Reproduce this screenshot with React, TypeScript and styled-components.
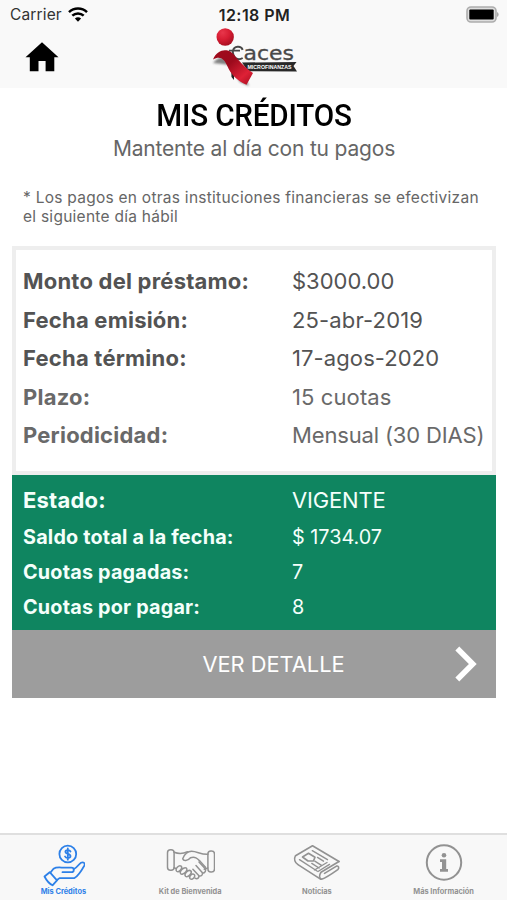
import React from 'react';
import styled, { createGlobalStyle } from 'styled-components';

const GlobalStyle = createGlobalStyle`
  * { box-sizing: border-box; }
  body { margin: 0; background: #fff; font-family: Inter, "Liberation Sans", sans-serif; }
`;

const Screen = styled.div`
  width: 507px;
  height: 900px;
  display: flex;
  flex-direction: column;
  background: #fff;
  overflow: hidden;
`;

const TopArea = styled.header`
  height: 88px;
  flex: none;
  background: #f9f9f9;
`;

const StatusBar = styled.div`
  height: 28px;
  padding: 1px 8px 0 10px;
  display: grid;
  grid-template-columns: 1fr auto 1fr;
  align-items: center;
`;

const Carrier = styled.div`
  display: flex;
  align-items: center;
  gap: 6px;
  font-size: 15.5px;
  letter-spacing: 0.15px;
  color: #333;
`;

const Clock = styled.div`
  font-size: 16px;
  font-weight: 600;
  letter-spacing: 0.45px;
  color: #222;
`;

const BatterySlot = styled.div`
  display: flex;
  justify-content: flex-end;
`;

const NavBar = styled.nav`
  height: 60px;
  padding: 0 25px;
  display: grid;
  grid-template-columns: 1fr auto 1fr;
  align-items: start;
`;

const HomeButton = styled.button`
  width: 34px;
  height: 44px;
  margin-top: 13px;
  padding: 0;
  border: 0;
  background: none;
  display: flex;
  align-items: flex-start;
`;

const Main = styled.main`
  flex: 1;
  display: flex;
  flex-direction: column;
  padding: 0 11px 0 12px;
`;

const Title = styled.h1`
  margin: 9px 0 0;
  height: 38px;
  line-height: 38px;
  text-align: center;
  font-family: Roboto, sans-serif;
  font-weight: 500;
  font-size: 31.5px;
  letter-spacing: -0.2px;
  transform: scaleX(0.94);
  color: #000;
`;

const Subtitle = styled.p`
  margin: 0;
  height: 28px;
  line-height: 28px;
  text-align: center;
  font-size: 21px;
  letter-spacing: -0.18px;
  color: #666;
`;

const Note = styled.p`
  margin: 25px 0 0;
  padding: 0 11px;
  height: 58px;
  font-size: 15.5px;
  line-height: 19px;
  letter-spacing: 0.26px;
  white-space: nowrap;
  color: #666;
`;

const LoanCard = styled.section`
  height: 229px;
  padding: 12px 0 0 7px;
  border: 4px solid #eee;
`;

const StatusCard = styled.section`
  height: 155px;
  padding: 5px 0 0 11px;
  background: #0f8560;
`;

const Row = styled.div<{ $height: number; $size: number; $color: string }>`
  display: grid;
  grid-template-columns: 269px 1fr;
  align-items: center;
  height: ${(p) => p.$height}px;
  font-size: ${(p) => p.$size}px;
  color: ${(p) => p.$color};
  white-space: nowrap;
`;

const Label = styled.span`
  font-weight: 700;
  letter-spacing: 0.01em;
`;

const Value = styled.span<{ $spacing: number }>`
  letter-spacing: ${(p) => p.$spacing}px;
`;

const DetailButton = styled.button`
  height: 68px;
  padding: 0 19px 0 80px;
  border: 0;
  display: grid;
  grid-template-columns: 1fr 22px;
  align-items: center;
  background: #9d9d9d;
  color: #fff;
  font-family: inherit;
  font-size: 21.8px;
`;

const TabBar = styled.nav`
  height: 67px;
  flex: none;
  display: grid;
  grid-template-columns: repeat(4, 1fr);
  border-top: 2px solid #dfdfdf;
  background: #f8f8f8;
`;

const Tab = styled.a<{ $active?: boolean }>`
  display: flex;
  flex-direction: column;
  align-items: center;
  color: ${(p) => (p.$active ? '#2d80e8' : '#929292')};
  font-size: 7.4px;
  font-weight: 700;
  line-height: 10px;
  svg { display: block; margin-top: 4px; }
`;

const WifiIcon = () => (
  <svg width="20" height="15" viewBox="0 0 20 15">
    <g fill="none" stroke="#000" strokeWidth="2.5">
      <path d="M1 5.2C6 .4 14 .4 19 5.2" />
      <path d="M4.3 8.7c3.2-3 8.2-3 11.4 0" />
    </g>
    <path d="M6.9 11.5c1.8-1.6 4.4-1.6 6.2 0L10 14.7z" />
  </svg>
);

const BatteryIcon = () => (
  <svg width="33" height="17" viewBox="0 0 33 17">
    <rect x="1" y="1" width="29" height="15" rx="4" fill="#dedede" stroke="#adadad" strokeWidth="1.6" />
    <rect x="3.3" y="3.5" width="24.4" height="10" rx="1" />
    <path d="M31.2 6v5c1.8-1 1.8-4 0-5z" fill="#999" />
  </svg>
);

const HomeIcon = () => (
  <svg width="34" height="31" viewBox="0 0 34 31">
    <path d="M17 1.2L33.5 16.3H29.3V30.3H20.6V20H13.5V30.3H4.8V16.3H.5z" />
  </svg>
);

const Logo = () => (
  <svg width="90" height="60" viewBox="209 28 90 60">
    <defs>
      <radialGradient id="ball" cx=".35" cy=".25" r=".8">
        <stop offset="0" stopColor="#e8364b" />
        <stop offset=".5" stopColor="#d71d33" />
        <stop offset="1" stopColor="#a50d1f" />
      </radialGradient>
      <linearGradient id="ribbon" x1="0" y1="0" x2="1" y2="1">
        <stop offset="0" stopColor="#a00c1c" />
        <stop offset=".4" stopColor="#9c0a1c" />
        <stop offset=".75" stopColor="#de2136" />
        <stop offset="1" stopColor="#a40c1e" />
      </linearGradient>
      <filter id="soft" x="-30%" y="-30%" width="160%" height="160%">
        <feGaussianBlur stdDeviation="1.2" />
      </filter>
    </defs>
    <path d="M213 63C219 56 225 55 229 64L240 82L249 86L240 66z" fill="#333" opacity=".6" filter="url(#soft)" />
    <path d="M231 64L234 68V80L231.5 77z" fill="#222" />
    <text x="243.5" y="59.8" fontFamily="DejaVu Sans" fontSize="20" fill="#484848" stroke="#484848" strokeWidth=".3" textLength="50.5" lengthAdjust="spacingAndGlyphs">aces</text>
    <path d="M242.7 49.8C241 45.4 234 45.7 232.8 51.2C233 58 238 61 242.7 58M229 50.6H240" fill="none" stroke="#484848" strokeWidth="1.9" />
    <path d="M242 62.5L296.5 62L293.5 66L297 71.5L248 71.2z" fill="#282828" />
    <text x="247.5" y="69" fontFamily="Liberation Sans" fontSize="6.2" fontWeight="700" fill="#fff" textLength="44" lengthAdjust="spacingAndGlyphs">MICROFINANZAS</text>
    <path d="M213 59.5C216 52 222 49.5 226.5 50.3C233 51.5 234 55.5 238 59.5C243 65 247.5 69.5 253 73L246.5 84.8C236 80 230.5 73.5 227.3 66C224 58.5 220 55.5 213 59.5z" fill="url(#ribbon)" />
    <circle cx="225.2" cy="37" r="8.7" fill="url(#ball)" />
  </svg>
);

const ChevronIcon = () => (
  <svg width="22" height="36" viewBox="0 0 22 36">
    <path d="M2.3 2.5L17.8 18L2.3 33.5" fill="none" stroke="#fff" strokeWidth="5.5" />
  </svg>
);

const HandCoinIcon = () => (
  <svg width="44" height="48" viewBox="41.5 839 44 48" fill="none" stroke="currentColor" strokeWidth="1.8" strokeLinejoin="round" strokeLinecap="round">
    <circle cx="68.3" cy="854" r="8.4" />
    <path d="M71 851.5C70 849.6 65.9 849.7 65.9 851.9C65.9 854.2 71 853.4 71 856.1C71 858.6 66.5 858.7 65.5 856.5M68.3 848.5V859.7" />
    <path d="M45 876.5L50.2 872.2L57.5 880.3L53 885.3C49.5 883.5 46.8 880 45 876.5z" />
    <path d="M51 872.5L54 868.7C57 866.7 61 867.6 64.5 867.7H72C75 867.7 75 872.2 72 872.2H63" />
    <path d="M74.5 869C78 867.3 79.5 863.8 81.5 862.7C84 861.6 86 863.4 84.8 865.7C82 870.7 79 875.7 75 878.1H60L57.5 880" />
  </svg>
);

const HandshakeIcon = () => (
  <svg width="50" height="48" viewBox="165.5 839 50 48" fill="none" stroke="currentColor" strokeWidth="1.5" strokeLinejoin="round" strokeLinecap="round">
    <rect x="168" y="849.7" width="6.6" height="20.6" rx="3" />
    <rect x="208.4" y="851" width="6.6" height="21" rx="3" />
    <path d="M174.6 852.2C180 854.3 183 854 188 851.7" />
    <path d="M208.4 854.3C201 854.7 198 851.4 192 851.3C188 851.3 185 854.4 183.2 858.7C184 861.4 188 861.2 191 857.7C196 856.2 198 858.7 201 861.7L206 867.2" />
    <path d="M174.6 867.8L176.5 868.5M208.4 868L204.8 869.2" />
    <path d="M177.2 871.2C175 869.2 179.5 864.4 181.7 866.2C183.7 868.2 179.3 873 177.2 871.2zM181.2 873.7C179.2 871.7 184.5 866.2 187 868.2C189 870.2 183.3 875.9 181.2 873.7zM186 876.2C184 874.2 189 868.9 191.3 870.9C193.3 872.9 188.2 878.2 186 876.2zM190.7 878.7C188.8 876.7 192.5 872.9 194.7 874.5C196.7 876.3 192.8 880.5 190.7 878.7z" />
    <path d="M195.5 878.2C198 879.7 200.3 877.5 199 875.2L193.4 869.2M199.3 876C202 876.6 204 874.3 202.5 872.2L196.5 865.6M203 873.2C205.5 873 207 870.7 205.5 868.4L199.5 862" />
  </svg>
);

const NewspaperIcon = () => (
  <svg width="48" height="48" viewBox="293 839 48 48" fill="none" stroke="currentColor" strokeWidth="1.6" strokeLinejoin="round" strokeLinecap="round">
    <path d="M339 861.5L312.5 845.7L295.5 855.7C293.5 859.2 295 862.7 298 864.7L320.5 879.2" />
    <path d="M339 861.5L321 872.2C319 875.2 319 878.2 321.5 879.3C326 877.8 333 873 337.8 869.6C339.5 868 338.6 865.4 336.5 866.1L324.5 873.4" />
    <path d="M302.5 857L308.5 853.2L315 857.2L313.5 860.9L308 861z" />
    <path d="M312.3 850.7L327.5 859.7M299.5 859.7L317 871M317.5 857.4L323.5 861.2M314.8 861.2L321.5 865.3M311.8 863.4L319 868M327 862.5L314.5 870M329.5 864.4L318 871.5" strokeWidth="1.4" />
  </svg>
);

const InfoIcon = () => (
  <svg width="38" height="48" viewBox="425 839 38 48">
    <circle cx="444" cy="862.5" r="17.2" fill="none" stroke="currentColor" strokeWidth="2" />
    <circle cx="444" cy="855.2" r="2.3" fill="currentColor" />
    <path d="M440 859.2H446.2V869H448V871.8H440V869H442V862H440z" fill="currentColor" />
  </svg>
);

const loanRows = [
  { label: 'Monto del préstamo:', value: '$3000.00', color: '#535353', spacing: 0 },
  { label: 'Fecha emisión:', value: '25-abr-2019', color: '#535353', spacing: 0.15 },
  { label: 'Fecha término:', value: '17-agos-2020', color: '#535353', spacing: 0.1 },
  { label: 'Plazo:', value: '15 cuotas', color: '#696969', spacing: 0.1 },
  { label: 'Periodicidad:', value: 'Mensual (30 DIAS)', color: '#696969', spacing: -0.15 },
];

const statusRows = [
  { label: 'Estado:', value: 'VIGENTE', size: 22, height: 39, spacing: -0.15 },
  { label: 'Saldo total a la fecha:', value: '$ 1734.07', size: 19.8, height: 35, spacing: 0 },
  { label: 'Cuotas pagadas:', value: '7', size: 19.8, height: 35, spacing: 0 },
  { label: 'Cuotas por pagar:', value: '8', size: 19.8, height: 35, spacing: 0 },
];

export default function App() {
  return (
    <Screen>
      <GlobalStyle />
      <TopArea>
        <StatusBar>
          <Carrier>Carrier <WifiIcon /></Carrier>
          <Clock>12:18 PM</Clock>
          <BatterySlot><BatteryIcon /></BatterySlot>
        </StatusBar>
        <NavBar>
          <HomeButton aria-label="Inicio"><HomeIcon /></HomeButton>
          <Logo />
        </NavBar>
      </TopArea>
      <Main>
        <Title>MIS CRÉDITOS</Title>
        <Subtitle>Mantente al día con tu pagos</Subtitle>
        <Note>
          * Los pagos en otras instituciones financieras se efectivizan<br />
          el siguiente día hábil
        </Note>
        <LoanCard>
          {loanRows.map((r) => (
            <Row key={r.label} $height={38.5} $size={22} $color={r.color}>
              <Label>{r.label}</Label>
              <Value $spacing={r.spacing}>{r.value}</Value>
            </Row>
          ))}
        </LoanCard>
        <StatusCard>
          {statusRows.map((r) => (
            <Row key={r.label} $height={r.height} $size={r.size} $color="#f4fffb">
              <Label>{r.label}</Label>
              <Value $spacing={r.spacing}>{r.value}</Value>
            </Row>
          ))}
        </StatusCard>
        <DetailButton>
          <span>VER DETALLE</span>
          <ChevronIcon />
        </DetailButton>
      </Main>
      <TabBar>
        <Tab $active><HandCoinIcon />Mis Créditos</Tab>
        <Tab><HandshakeIcon />Kit de Bienvenida</Tab>
        <Tab><NewspaperIcon />Noticias</Tab>
        <Tab><InfoIcon />Más Información</Tab>
      </TabBar>
    </Screen>
  );
}
